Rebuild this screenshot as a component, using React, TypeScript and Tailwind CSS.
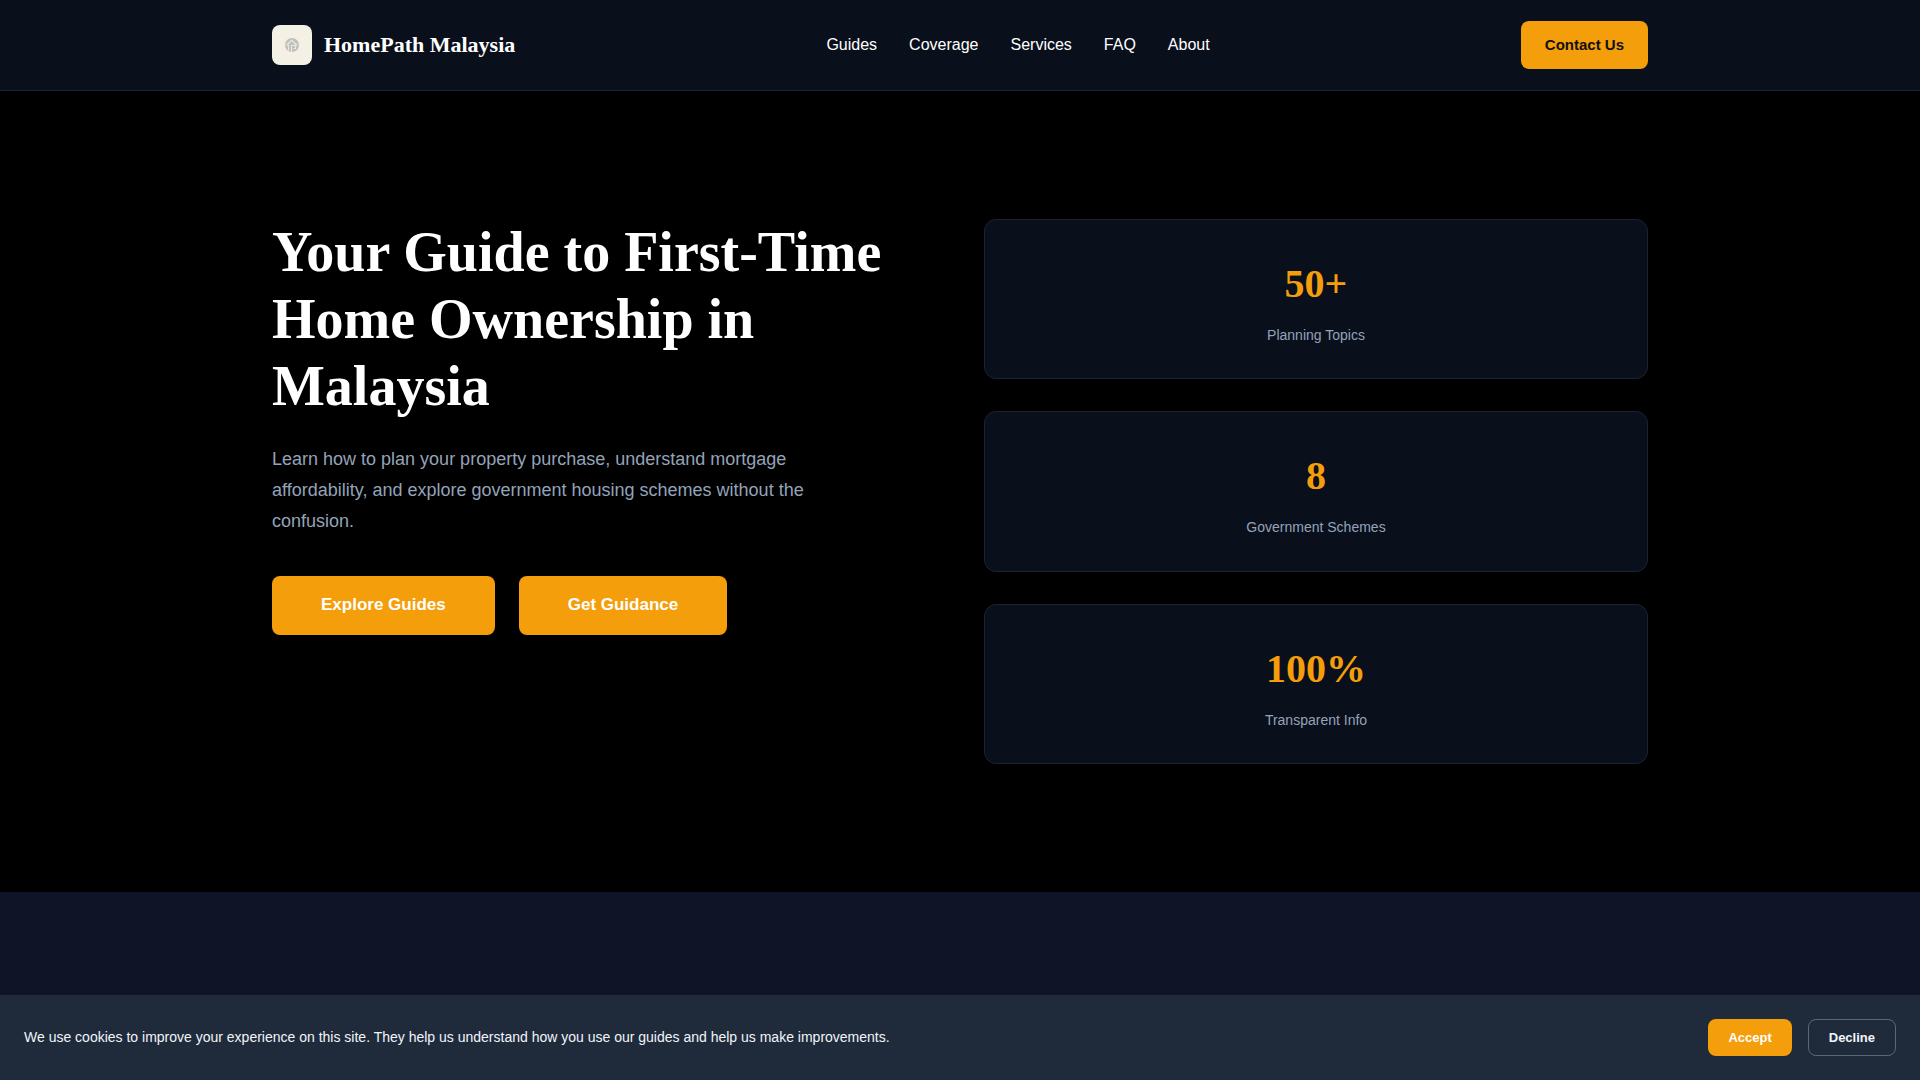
import { useState } from 'react';

/* -------------------------------------------------------------------------- */
/*  Static Data                                                                */
/* -------------------------------------------------------------------------- */

const navLinks = [
  { label: 'Guides', href: '#guides' },
  { label: 'Coverage', href: '#coverage' },
  { label: 'Services', href: '#services' },
  { label: 'FAQ', href: '#faq' },
  { label: 'About', href: '#about' },
];

const stats = [
  { value: '50+', label: 'Planning Topics' },
  { value: '8', label: 'Government Schemes' },
  { value: '100%', label: 'Transparent Info' },
];

/* -------------------------------------------------------------------------- */
/*  Components                                                                 */
/* -------------------------------------------------------------------------- */

function Logo() {
  return (
    <svg viewBox="0 0 40 40" className="h-10 w-10 rounded-lg" aria-hidden="true">
      <rect width="40" height="40" fill="#f3f0e4" />
      <rect x="7" y="8" width="24" height="24" fill="#f5efe4" />
      <circle cx="20" cy="20" r="7" fill="#c0c0bc" />
      {/* roof */}
      <path
        d="M14.5 20.5 L19.7 15.2 L25 20.5"
        fill="none"
        stroke="#f0ede4"
        strokeWidth="1.1"
      />
      {/* walls and the path that runs up to the door */}
      <path
        d="M16.5 19.5 V25.5 M19.5 27 V20.5 H23.5 V23.5 H21.5"
        fill="none"
        stroke="#ebe8df"
        strokeWidth="1.1"
      />
    </svg>
  );
}

function Header() {
  return (
    <header className="border-b border-[#1a2233] bg-[#0a0f1c]">
      <div className="mx-auto flex max-w-[1440px] items-center justify-between px-8 py-[21px]">
        <a href="#home" className="flex items-center gap-3">
          <Logo />
          <span className="font-['Liberation_Serif',serif] text-[22px] leading-8 font-bold">
            HomePath Malaysia
          </span>
        </a>
        <nav className="flex items-center gap-8">
          {navLinks.map((link) => (
            <a key={link.label} href={link.href} className="text-base">
              {link.label}
            </a>
          ))}
        </nav>
        <button
          type="button"
          className="rounded-lg bg-[#f59e0b] px-6 py-3 text-[15px] leading-6 font-bold text-[#111111]"
        >
          Contact Us
        </button>
      </div>
    </header>
  );
}

function Hero() {
  return (
    <section className="bg-black">
      <div className="mx-auto grid max-w-[1440px] grid-cols-2 gap-12 px-8 py-32">
        <div>
          <h1 className="font-['Liberation_Serif',serif] text-[56px] leading-[67px] font-bold">
            Your Guide to First-Time Home Ownership in Malaysia
          </h1>
          <p className="mt-6 max-w-[560px] text-lg leading-[31px] text-[#94a3b8]">
            Learn how to plan your property purchase, understand mortgage
            affordability, and explore government housing schemes without the
            confusion.
          </p>
          <div className="mt-[39px] flex gap-6">
            <a
              href="#guides"
              className="rounded-lg bg-[#f59e0b] px-[49px] pt-4 pb-[18px] text-[17px] leading-[25px] font-bold"
            >
              Explore Guides
            </a>
            <a
              href="#contact"
              className="rounded-lg bg-[#f59e0b] px-[49px] pt-4 pb-[18px] text-[17px] leading-[25px] font-bold"
            >
              Get Guidance
            </a>
          </div>
        </div>
        <div className="grid min-h-[545px] auto-rows-fr gap-8">
          {stats.map((stat) => (
            <div
              key={stat.label}
              className="rounded-xl border border-[#1a2233] bg-[#0a0f1c] p-8 text-center"
            >
              <div className="font-['Liberation_Serif',serif] text-[40px] leading-[64px] font-bold text-[#f59e0b]">
                {stat.value}
              </div>
              <div className="mt-2 text-sm leading-[22px] text-[#94a3b8]">
                {stat.label}
              </div>
            </div>
          ))}
        </div>
      </div>
    </section>
  );
}

function CookieBanner() {
  const [visible, setVisible] = useState(true);

  if (!visible) return null;

  return (
    <div className="fixed inset-x-0 bottom-0 flex items-center justify-between bg-[#1f2a3b] p-6 text-[#f1f5f9]">
      <p className="text-sm leading-[21px]">
        We use cookies to improve your experience on this site. They help us
        understand how you use our guides and help us make improvements.
      </p>
      <div className="flex gap-4">
        <button
          type="button"
          onClick={() => setVisible(false)}
          className="rounded-lg bg-[#f59e0b] px-5 py-2 text-[13px] leading-5 font-bold text-white"
        >
          Accept
        </button>
        <button
          type="button"
          onClick={() => setVisible(false)}
          className="rounded-lg border border-[#5b6676] px-5 py-2 text-[13px] leading-[19px] font-bold"
        >
          Decline
        </button>
      </div>
    </div>
  );
}

export default function App() {
  return (
    <div className="min-h-screen bg-[#0f1526] font-['Liberation_Sans',sans-serif] text-white">
      <Header />
      <Hero />
      <CookieBanner />
    </div>
  );
}
